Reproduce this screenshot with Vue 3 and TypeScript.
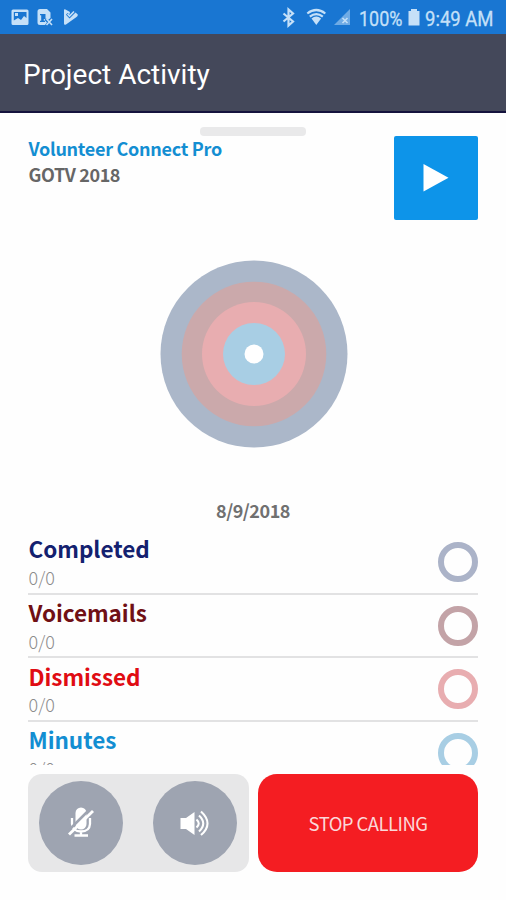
<script setup lang="ts">
interface Metric {
  name: string
  value: string
  key: string
}

const metrics: Metric[] = [
  { name: 'Completed', value: '0/0', key: 'completed' },
  { name: 'Voicemails', value: '0/0', key: 'voicemails' },
  { name: 'Dismissed', value: '0/0', key: 'dismissed' },
  { name: 'Minutes', value: '0/0', key: 'minutes' },
]
</script>

<template>
  <div class="screen">
    <header class="status">
      <svg class="status-left" width="90" height="34" viewBox="0 0 90 34">
        <path fill-rule="evenodd" d="M13 9.500H27Q28.500 9.500 28.500 11V23.500Q28.500 25 27 25H13Q11.500 25 11.500 23.500V11Q11.500 9.500 13 9.500ZM13.800 12V20.500L18 18L21 20L24 16L26.500 18V12ZM15 13H18V16H15Z" />
        <path fill-rule="evenodd" d="M40 9H47L50.500 12.500V18L48 20L46 18.500L44.500 20L47 22.500L45 25H40Q37.500 25 37.500 22.500V11.500Q37.500 9 40 9ZM40 14V15.200H41.200V20.800H40V22H45V20.800H43.800V19H45.500V14Z" />
        <path d="M46.500 19L52 25M52 19L46.500 25" class="thin" />
        <path d="M64 10Q64 9 65.500 9.500L70 12L69.500 14.500L67.500 13L66 14.800L69.500 18.500L75.500 12.500L77.800 14.500Q78 16 76.500 17L66 24.500Q64 25.500 64 23.500Z" />
        <path d="M67.500 14L69.500 16L74 11.500" class="thin" />
      </svg>
      <svg class="status-right" width="226" height="34" viewBox="280 0 226 34">
        <path d="M283.500 13.500L293 21.500L288.500 25.500V9.500L293 13.500L283.500 21.500" class="thick" />
        <path d="M307.300 13.500Q316.300 6.500 325.300 13.500M309.800 16.700Q316.300 11.500 322.800 16.700" class="thick" />
        <path d="M311.500 18.600Q316.300 14.600 321.100 18.600L316.300 25Z" />
        <path d="M350 9V25H334Z" opacity=".5" />
        <path d="M342.500 18L347.500 23M347.500 18L342.500 23" class="thin" />
        <text x="359" y="25.500" textLength="43.500" lengthAdjust="spacingAndGlyphs">100%</text>
        <path d="M411 9H417V11H419.500V25.500H408.500V11H411Z" />
        <text x="425" y="25.500" textLength="68.500" lengthAdjust="spacingAndGlyphs">9:49 AM</text>
      </svg>
    </header>
    <div class="app-bar"><h1>Project Activity</h1></div>

    <main class="sheet">
      <div class="handle"></div>
      <section class="project">
        <div class="names">
          <div class="org">Volunteer Connect Pro</div>
          <div class="campaign">GOTV 2018</div>
        </div>
        <button class="play" aria-label="Play">
          <svg width="84" height="84" viewBox="0 0 84 84"><path d="M29.500 28V55.500L54.500 41.700Z" fill="#fff" /></svg>
        </button>
      </section>

      <svg class="target" width="188" height="188" viewBox="0 0 188 188">
        <circle cx="94" cy="94" r="93.500" fill="#abb7c9" />
        <circle cx="94" cy="94" r="72.300" fill="#cba9ab" />
        <circle cx="94" cy="94" r="52" fill="#e8adb0" />
        <circle cx="94" cy="94" r="31" fill="#a8cee4" />
        <circle cx="94" cy="94" r="9.500" fill="#fff" />
      </svg>
      <div class="date">8/9/2018</div>

      <ul class="metrics">
        <li v-for="m in metrics" :key="m.key" :class="m.key">
          <div class="label">
            <div class="name">{{ m.name }}</div>
            <div class="value">{{ m.value }}</div>
          </div>
          <span class="ring"></span>
        </li>
      </ul>

      <footer class="controls">
        <div class="audio">
          <button class="round" aria-label="Mute">
            <svg width="84" height="84" viewBox="0 0 84 84">
              <rect x="36.500" y="26.500" width="11" height="22" rx="5.500" fill="#fff" />
              <path d="M33 37V43Q33.500 50.500 42 50.500T51 43V37M42 50V55M35.500 54.500H49" class="line" />
              <path d="M28.500 50.500L51.500 27.500" stroke="#9ea4b1" stroke-width="2.5" />
              <path d="M30 53.500L54 30" class="line slash" />
            </svg>
          </button>
          <button class="round" aria-label="Speaker">
            <svg width="84" height="84" viewBox="0 0 84 84">
              <path d="M27.500 37H33L41.500 31V54L33 48H27.500Z" fill="#fff" />
              <path d="M43.500 38.500Q48 42.500 43.500 46.500M46 34.500Q54.500 42.500 46 50.500M48 30.500Q61 42.500 48 54" class="line wave" />
            </svg>
          </button>
        </div>
        <button class="stop">STOP CALLING</button>
      </footer>
    </main>
  </div>
</template>

<style>
body {
  margin: 0;
  background: #fefefe;
}
</style>

<style scoped>
.screen {
  width: 506px;
  height: 900px;
  overflow: hidden;
  display: flex;
  flex-direction: column;
  background: #fefefe;
  font-family: "Noto Sans CJK JP", "Open Sans", sans-serif;
}
button {
  border: 0;
  padding: 0;
  font: inherit;
}
svg {
  display: block;
}
.status {
  height: 34px;
  flex: none;
  display: flex;
  justify-content: space-between;
  background: #1976d2;
  fill: #c5e0f8;
}
.status text {
  font: 21px Roboto, sans-serif;
  stroke: #c5e0f8;
  stroke-width: 0.3;
}
.thin,
.thick {
  fill: none;
  stroke: #c5e0f8;
  stroke-width: 1.6;
}
.thick {
  stroke-width: 2.2;
}
.app-bar {
  box-sizing: border-box;
  height: 79px;
  flex: none;
  padding: 23px 0 0 23px;
  background: #44485a;
  border-bottom: 2px solid #15133d;
}
h1 {
  margin: 0;
  font: 400 28px/36px Roboto, sans-serif;
  color: #fff;
}
.sheet {
  flex: 1;
  display: flex;
  flex-direction: column;
  padding: 14px 28px 0;
}
.handle {
  width: 106px;
  height: 9px;
  flex: none;
  margin-left: 172px;
  border-radius: 4px;
  background: #e9e9ea;
}
.project {
  height: 84px;
  flex: none;
  display: flex;
  justify-content: space-between;
}
.names {
  margin: -1px 0 0 0.500px;
}
.org,
.campaign {
  font-size: 18px;
  letter-spacing: -0.280px;
  line-height: 26px;
  font-weight: 700;
  color: #138ed2;
}
.campaign {
  letter-spacing: -0.400px;
  color: #666;
}
.play {
  width: 84px;
  height: 84px;
  border-radius: 2px;
  background: #0d94e9;
}
.target {
  flex: none;
  margin: 40px 0 0 131.500px;
}
.date {
  height: 26px;
  flex: none;
  margin-top: 49px;
  text-align: center;
  font-size: 18px;
  letter-spacing: -0.450px;
  line-height: 26px;
  font-weight: 700;
  color: #707070;
}
.metrics {
  list-style: none;
  margin: 8px 0 0;
  padding: 0;
  height: 234px;
  flex: none;
  overflow: hidden;
}
.metrics li {
  box-sizing: border-box;
  height: 63.700px;
  display: flex;
  justify-content: space-between;
  align-items: center;
  border-bottom: 2px solid #e2e2e3;
}
.label {
  margin: -1.500px 0 0 0.500px;
}
.name {
  font-size: 22.500px;
  letter-spacing: -0.040px;
  line-height: 32px;
  font-weight: 700;
}
.value {
  margin-top: -0.500px;
  font-size: 18px;
  line-height: 26px;
  font-weight: 300;
  color: #8c8c8c;
}
.ring {
  box-sizing: border-box;
  width: 40px;
  height: 40px;
  border: 6px solid;
  border-radius: 50%;
}
.completed .name { color: #14216f; }
.voicemails .name { color: #701015; }
.dismissed .name { color: #e00c13; }
.minutes .name { color: #138ed2; }
.completed .ring { color: #abb3c8; }
.voicemails .ring { color: #c3a3a7; }
.dismissed .ring { color: #e8adb0; }
.minutes .ring { color: #a8cee4; }
.controls {
  display: flex;
  justify-content: space-between;
  height: 98px;
  margin-top: 9px;
}
.audio {
  box-sizing: border-box;
  width: 221px;
  height: 98px;
  padding: 7px 12px 7px 10.500px;
  display: flex;
  justify-content: space-between;
  border-radius: 14px;
  background: #e7e7e8;
}
.round {
  width: 84px;
  height: 84px;
  border-radius: 50%;
  background: #9ea4b1;
}
.line {
  fill: none;
  stroke: #fff;
  stroke-width: 2.3;
}
.slash {
  stroke-width: 2.8;
}
.wave {
  stroke-width: 2.1;
}
.stop {
  width: 220px;
  height: 98px;
  border-radius: 19px;
  background: #f41d22;
  color: #fbd8d9;
  font-size: 18.500px;
  letter-spacing: -0.550px;
}
</style>
